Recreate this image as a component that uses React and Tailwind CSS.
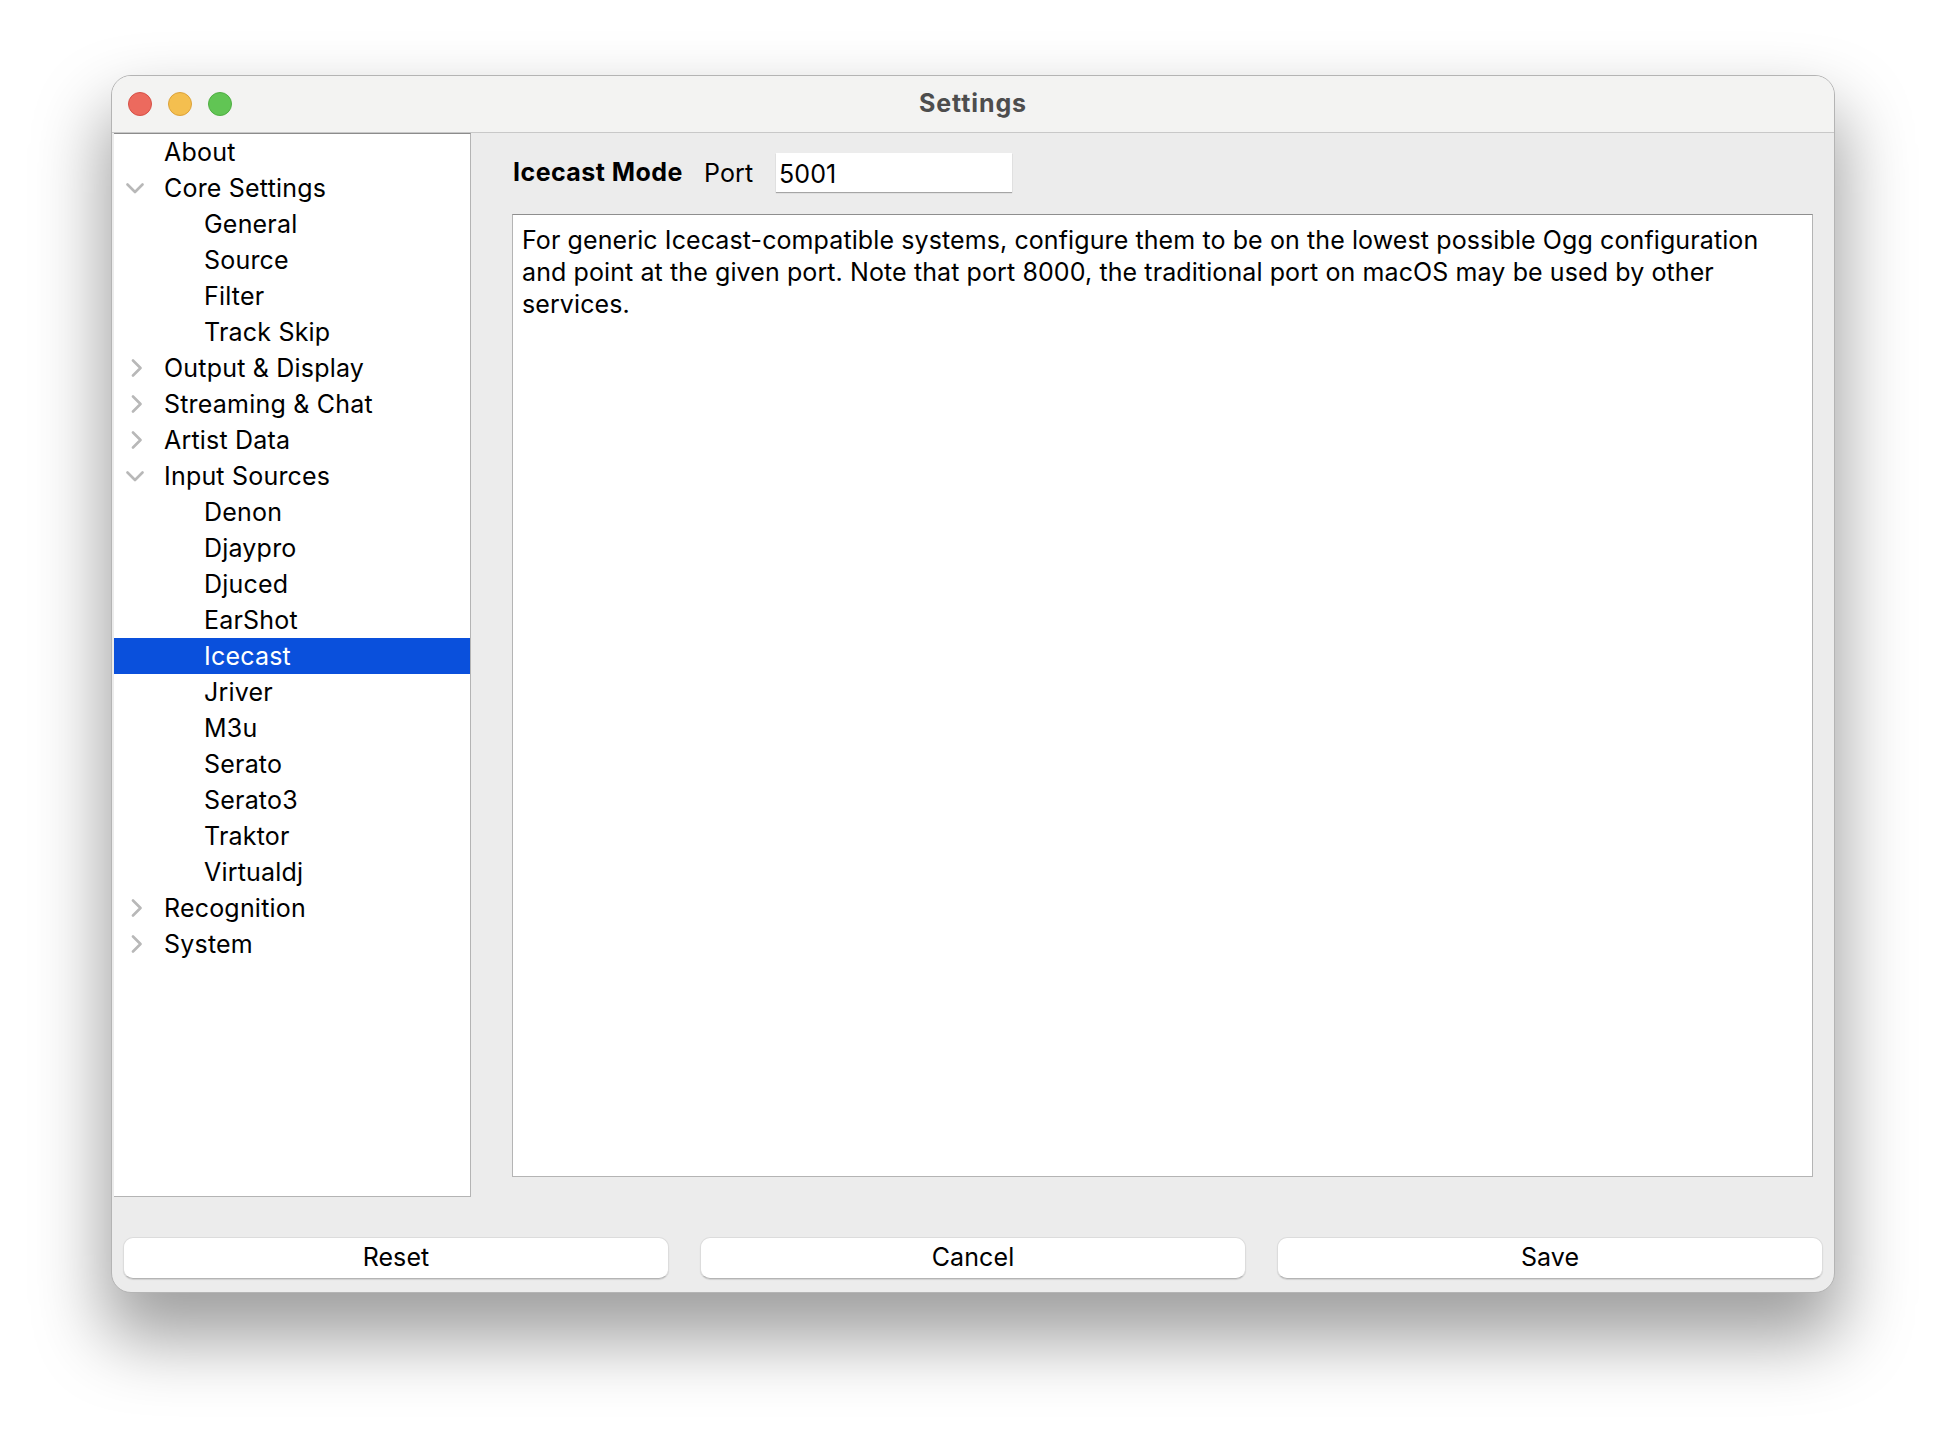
const tree = [
  { label: 'About', level: 1 },
  { label: 'Core Settings', level: 1, arrow: 'down' },
  { label: 'General', level: 2 },
  { label: 'Source', level: 2 },
  { label: 'Filter', level: 2 },
  { label: 'Track Skip', level: 2 },
  { label: 'Output & Display', level: 1, arrow: 'right' },
  { label: 'Streaming & Chat', level: 1, arrow: 'right' },
  { label: 'Artist Data', level: 1, arrow: 'right' },
  { label: 'Input Sources', level: 1, arrow: 'down' },
  { label: 'Denon', level: 2 },
  { label: 'Djaypro', level: 2 },
  { label: 'Djuced', level: 2 },
  { label: 'EarShot', level: 2 },
  { label: 'Icecast', level: 2, selected: true },
  { label: 'Jriver', level: 2 },
  { label: 'M3u', level: 2 },
  { label: 'Serato', level: 2 },
  { label: 'Serato3', level: 2 },
  { label: 'Traktor', level: 2 },
  { label: 'Virtualdj', level: 2 },
  { label: 'Recognition', level: 1, arrow: 'right' },
  { label: 'System', level: 1, arrow: 'right' },
];

function Arrow({ dir }) {
  if (dir === 'down') {
    return (
      <svg className="absolute left-[12px] top-[13px] w-[18px] h-[11px]" viewBox="0 0 18 11" fill="none">
        <path d="M1.5 1.5L9 9L16.5 1.5" stroke="#b8b8b8" strokeWidth="2.6" strokeLinecap="round" strokeLinejoin="round" />
      </svg>
    );
  }
  return (
    <svg className="absolute left-[17px] top-[9px] w-[12px] h-[18px]" viewBox="0 0 12 18" fill="none">
      <path d="M2 1.5L9.5 9L2 16.5" stroke="#b8b8b8" strokeWidth="2.6" strokeLinecap="round" strokeLinejoin="round" />
    </svg>
  );
}

function TreeRow({ item }) {
  const color = item.selected ? 'bg-[#0a50dc] text-white' : 'text-black';
  const indent = item.level === 2 ? 'pl-[90px]' : 'pl-[50px]';
  return (
    <div className={`relative h-[36px] leading-[36px] whitespace-nowrap tracking-[0.2px] ${indent} ${color}`}>
      {item.arrow && <Arrow dir={item.arrow} />}
      {item.label}
    </div>
  );
}

function FooterButton({ children }) {
  return (
    <button className="flex-1 h-[42px] rounded-[10px] bg-white border border-[#dcdcdc] border-b-[#b4b4b4] shadow-[0_1px_1px_rgba(0,0,0,0.12)] text-black text-[25px] leading-[36px] pb-[3px] text-center">
      {children}
    </button>
  );
}

export default function App() {
  return (
    <div className="w-[1946px] h-[1440px] overflow-hidden bg-white pl-[111px] pt-[75px] font-['Inter','Noto_Sans',sans-serif] text-[25px] tracking-[0.1px]">
      <div className="w-[1724px] h-[1218px] flex flex-col rounded-[20px] overflow-hidden bg-[#ececec] border border-[#b4b4b4] shadow-[0_40px_70px_6px_rgba(0,0,0,0.38)]">
        {/* title bar */}
        <div className="relative h-[57px] shrink-0 bg-[#f3f3f2] border-b border-[#c8c8c8] flex items-center justify-center">
          <div className="absolute left-[16px] top-[16px] flex gap-[16px]">
            <span className="w-[24px] h-[24px] rounded-full bg-[#ec6a5e] border border-[#d65047]" />
            <span className="w-[24px] h-[24px] rounded-full bg-[#f4bf4f] border border-[#dca23a]" />
            <span className="w-[24px] h-[24px] rounded-full bg-[#61c554] border border-[#4fae43]" />
          </div>
          <span className="font-bold text-[#4d4d4d] tracking-[0.9px]">Settings</span>
        </div>

        <div className="flex h-[1064px] shrink-0">
          {/* sidebar */}
          <div className="w-[357px] shrink-0 ml-[2px] bg-white border-t border-t-[#8c8c8c] border-r-[1.5px] border-r-[#b4b4b4] border-b-[1.5px] border-b-[#b4b4b4]">
            {tree.map((item) => (
              <TreeRow key={item.label} item={item} />
            ))}
          </div>

          {/* content */}
          <div className="flex-1 flex flex-col pl-[41px] pr-[21px]">
            <div className="flex items-center h-[62px] pt-[17px] pl-px shrink-0">
              <span className="font-bold w-[191px] shrink-0 tracking-[0.45px]">Icecast Mode</span>
              <span className="w-[72px] shrink-0 mt-[3px]">Port</span>
              <div className="w-[236px] h-[39px] bg-white pl-[3px] leading-[43px] shadow-[0_1px_1px_rgba(0,0,0,0.3)]">5001</div>
            </div>
            <div className="mt-[19px] h-[963px] bg-white border-[1.5px] border-[#b4b4b4] border-t-[#8e8e8e] pl-[9px] pr-[10px] pt-[9px] leading-[32px]">
              For generic Icecast-compatible systems, configure them to be on the lowest possible Ogg configuration and point at the given port. Note that port 8000, the traditional port on macOS may be used by other services.
            </div>
          </div>
        </div>

        {/* footer buttons */}
        <div className="flex gap-[31px] pl-[11px] pr-[11px] pt-[40px]">
          <FooterButton>Reset</FooterButton>
          <FooterButton>Cancel</FooterButton>
          <FooterButton>Save</FooterButton>
        </div>
      </div>
    </div>
  );
}
